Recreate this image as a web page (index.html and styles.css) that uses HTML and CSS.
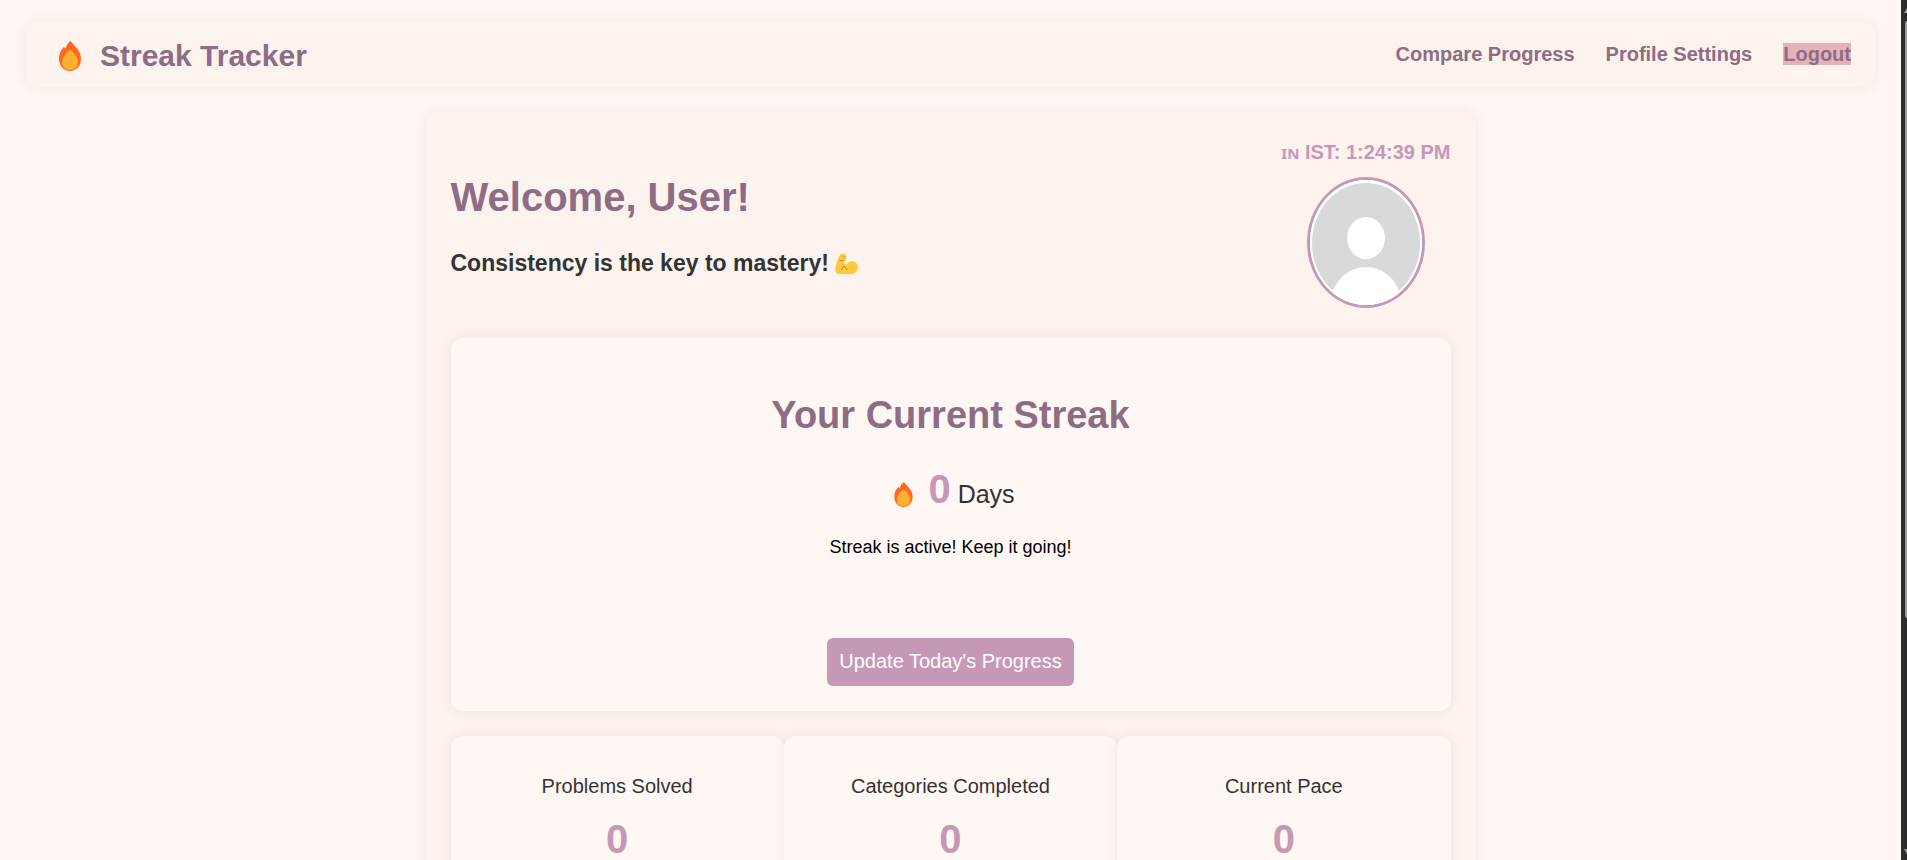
FILE: index.html
```html
<!DOCTYPE html>
<html lang="en">
<head>
<meta charset="utf-8">
<title>Streak Tracker</title>
<link rel="stylesheet" href="styles.css">
</head>
<body>
<svg class="defs" aria-hidden="true">
  <symbol id="flame" viewBox="0 0 22 30">
    <path fill="#ff6723" d="M11.500 0C9 2 7.300 4.500 6.500 7.500L5 6C2 8.500 0 12.500 0 17.500 0 25 4.500 30 11 30s11-5 11-12.500C22 10 16 5.500 11.500 0z"/>
    <path fill="#ffb02e" d="M11 8.500c-4 3.500-8 8-8 13 0 4.500 3.500 7.500 8 7.500s8-3 8-7.500c0-5-4-9.500-8-13z"/>
  </symbol>
</svg>
<div class="page">
  <header class="topbar">
    <div class="brand"><svg class="brand-icon" aria-hidden="true"><use href="#flame"/></svg><span>Streak Tracker</span></div>
    <nav class="nav">
      <a href="#">Compare Progress</a>
      <a href="#">Profile Settings</a>
      <a href="#" class="active">Logout</a>
    </nav>
  </header>
  <main class="panel">
    <section class="intro">
      <div class="greeting">
        <h1>Welcome, User!</h1>
        <p class="quote">Consistency is the key to mastery!
          <svg class="arm" viewBox="0 0 24 22" aria-hidden="true">
            <path fill="#ffc83d" d="M4.500 3.500C5 1 6.500 0 8.300 0c2 0 3.700 1.500 3.700 3.700 0 1.800-.8 3.300-2.500 4.300L8.500 9.500l3.700 2.300C13 9.500 15 8 17.500 8c3.700 0 6.300 2.900 6.300 6.300 0 4.200-3 7.200-7.300 7.200H5c-3.500 0-5-2-4.700-5C.8 11.500 2.500 7 4.500 3.500z"/>
            <path fill="none" stroke="#d67d00" stroke-width="1" stroke-linecap="round" stroke-linejoin="round" d="M8.500 3.500h1M5 7l3 .8 1.500-.8M7 17l2-3.500M10 13.500l2.500 3.500"/>
          </svg>
        </p>
      </div>
      <div class="profile">
        <div class="clock"><span class="flag">IN</span> IST: 1:24:39 PM</div>
        <svg class="avatar" viewBox="0 0 112 125" preserveAspectRatio="none" role="img" aria-label="Profile picture">
          <rect width="112" height="125" fill="#fff"/>
          <ellipse cx="56" cy="63" rx="54" ry="60" fill="#d7d9da"/>
          <ellipse cx="56" cy="58" rx="19" ry="21" fill="#fff"/>
          <path fill="#fff" d="M21 117C25 99 40 87 56 87s31 12 35 30v8H21z"/>
        </svg>
      </div>
    </section>
    <section class="card streak">
      <h2>Your Current Streak</h2>
      <p class="count"><svg class="count-icon" aria-hidden="true"><use href="#flame"/></svg><strong>0</strong><span>Days</span></p>
      <p class="status">Streak is active! Keep it going!</p>
      <button type="button" class="update">Update Today's Progress</button>
    </section>
    <section class="stats">
      <div class="card stat"><p>Problems Solved</p><strong>0</strong></div>
      <div class="card stat"><p>Categories Completed</p><strong>0</strong></div>
      <div class="card stat"><p>Current Pace</p><strong>0</strong></div>
    </section>
  </main>
</div>
<div class="scrollbar" aria-hidden="true"><span class="arrow up"></span><span class="thumb"></span><span class="arrow down"></span></div>
</body>
</html>
```
FILE: styles.css
```css
:root {
  --bg: #fff7f3;
  --panel: #fcf3ee;
  --heading: #8e6c84;
  --accent: #c599b6;
  --shadow: 0 0 13px rgba(0, 0, 0, 0.07);
}

* {
  box-sizing: border-box;
}

body {
  margin: 0;
  display: flex;
  height: 100vh;
  overflow: hidden;
  background: var(--bg);
  color: #333;
  font-family: "Liberation Sans", Arial, sans-serif;
  font-size: 20px;
}

h1, h2, p {
  margin: 0;
}

.defs {
  position: absolute;
  width: 0;
  height: 0;
}

.page {
  flex: 1;
  padding: 22px 25px 0;
}

.topbar {
  display: flex;
  justify-content: space-between;
  align-items: center;
  height: 65px;
  padding: 0 25px 0 34px;
  border-radius: 12px;
  background: var(--panel);
  box-shadow: var(--shadow);
}

.brand {
  display: flex;
  align-items: center;
  gap: 19px;
  padding-top: 2px;
  color: var(--heading);
  font-size: 30px;
  font-weight: bold;
}

.brand-icon {
  width: 22px;
  height: 30px;
}

.nav {
  display: flex;
  gap: 31px;
  padding-bottom: 2px;
}

.nav a {
  color: var(--heading);
  font-weight: bold;
  text-decoration: none;
  line-height: 22px;
}

.nav .active {
  background: #e6b2ba;
}

.panel {
  max-width: 1050px;
  margin: 25px auto 0;
  padding: 25px;
  border-radius: 12px;
  background: var(--panel);
  box-shadow: var(--shadow);
}

.intro {
  display: flex;
  justify-content: space-between;
  height: 201px;
}

.greeting {
  padding-top: 37px;
}

h1 {
  color: var(--heading);
  font-size: 40px;
  line-height: 46px;
}

.quote {
  margin-top: 30px;
  font-size: 23px;
  font-weight: bold;
  line-height: 26px;
}

.arm {
  width: 23px;
  height: 22px;
  vertical-align: -4px;
}

.profile {
  display: flex;
  flex-direction: column;
  align-items: flex-end;
}

.clock {
  margin-top: 3px;
  color: var(--accent);
  font-weight: bold;
  line-height: 24px;
}

.flag {
  font-family: "Noto Sans", sans-serif;
  font-size: 15px;
  line-height: 20px;
}

.avatar {
  width: 118px;
  height: 131px;
  margin: 13px 26px 0 0;
  border: 3px solid var(--accent);
  border-radius: 50%;
}

.card {
  border-radius: 12px;
  background: var(--bg);
  box-shadow: var(--shadow);
  text-align: center;
}

.streak {
  padding: 55px 25px 25px;
}

h2 {
  color: var(--heading);
  font-size: 38px;
  line-height: 44px;
}

.count {
  display: flex;
  justify-content: center;
  align-items: baseline;
  margin-top: 29px;
  font-size: 25px;
  line-height: 46px;
}

.count-icon {
  width: 19px;
  height: 25px;
  margin: 0 15px 10px 8px;
  align-self: flex-end;
}

.count strong, .stat strong {
  color: var(--accent);
  font-size: 40px;
}

.count span {
  margin-left: 7px;
}

.status {
  margin-top: 20px;
  color: #000;
  font-size: 18px;
  line-height: 20px;
}

.update {
  margin-top: 81px;
  padding: 11px 12px 13px;
  border: 0;
  border-radius: 6px;
  background: var(--accent);
  color: #fff;
  font: inherit;
  line-height: 24px;
}

.stats {
  display: grid;
  grid-template-columns: repeat(3, 1fr);
  margin-top: 25px;
}

.stat {
  padding: 38px 25px;
}

.stat p {
  line-height: 24px;
}

.stat strong {
  display: block;
  margin-top: 18px;
  line-height: 46px;
}

.scrollbar {
  display: flex;
  flex-direction: column;
  align-items: flex-end;
  width: 6px;
  padding: 8px 0 6px;
  background: #2c2c2c;
}

.arrow {
  border: 0 solid transparent;
  border-right: 3px solid #9f9f9f;
}

.up {
  border-top-width: 5px;
}

.down {
  border-bottom-width: 5px;
  margin-top: auto;
}

.thumb {
  width: 2px;
  height: 597px;
  margin-top: 8px;
  border-radius: 2px 0 0 2px;
  background: #9f9f9f;
}
```
